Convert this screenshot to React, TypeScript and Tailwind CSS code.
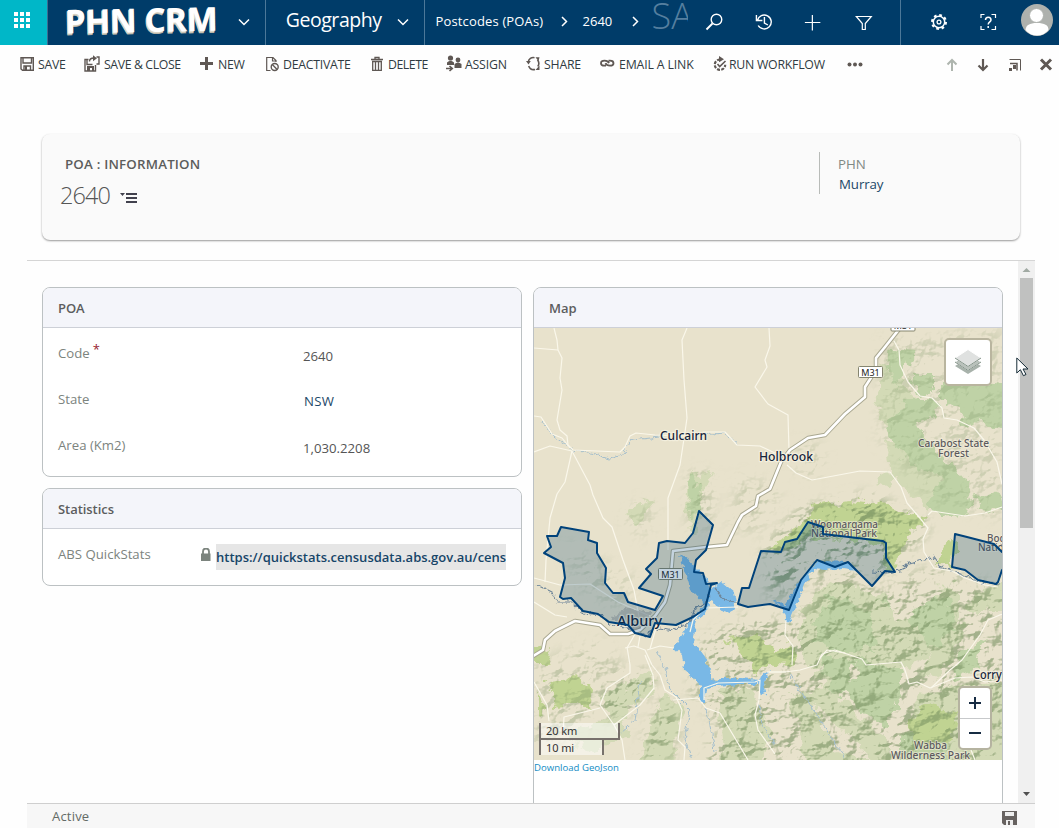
import React from "react";

const Chevron = ({ dir = "down" }: { dir?: "down" | "right" }) => (
  <svg className="shrink-0" width="12" height="12" viewBox="0 0 12 12" fill="none" stroke="#fff" strokeWidth="1.5">
    <path d={dir === "down" ? "M1 3.5l5 5 5-5" : "M4 2l4.5 4.5L4 11"} />
  </svg>
);

function TopBar() {
  return (
    <header className="flex h-[45px] bg-[#003c69] text-white">
      <div className="flex w-12 items-center border-r border-[#3d6c90] bg-[#00b7c8]">
        <div className="ml-3.5 -mt-[5px] grid grid-cols-3 gap-0.5">
          {Array.from({ length: 9 }, (_, i) => (
            <span key={i} className="h-1 w-1 bg-white" />
          ))}
        </div>
      </div>
      <div className="flex w-[218px] border-r border-[#4c7899]">
        <span className="ml-[17px] w-[172px] -rotate-1 whitespace-nowrap font-['Open_Sans',sans-serif] text-[33px] font-bold leading-[39px] tracking-[-0.4px] [text-shadow:-1px_1px_0_#d9d4c4,-1px_2px_0_#b9b5a9]">
          PHN CRM
        </span>
        <span className="mt-4 ml-px"><Chevron /></span>
      </div>
      <div className="flex w-[159px] border-r border-[#4c7899]">
        <span className="ml-[20px] w-[111px] whitespace-nowrap text-[19.5px] leading-[40px] tracking-[-0.45px]">Geography</span>
        <span className="mt-4"><Chevron /></span>
      </div>
      <nav className="flex w-[265px] text-[13px] leading-[42px]">
        <span className="ml-[11px] w-[122px] whitespace-nowrap tracking-[0.15px]">Postcodes (POAs)</span>
        <span className="mt-[15px]"><Chevron dir="right" /></span>
        <span className="ml-[13px] w-[46px]">2640</span>
        <span className="mt-[15px]"><Chevron dir="right" /></span>
        <span className="ml-[11px] mt-[-2px] h-8 w-[36px] overflow-hidden whitespace-nowrap font-['Open_Sans',sans-serif] text-[36px] font-light leading-[36px] text-[#557f9f]">SA</span>
      </nav>
      <svg width="211" height="45" viewBox="689 0 211 45" fill="none" stroke="#fff" strokeWidth="1.4">
        <circle cx="716.5" cy="19.5" r="5.3" /><path d="M712.5 23.5l-6 6" strokeWidth="1.8" />
        <path d="M757.5 20.5a7 7 0 1 1 .8 5M756.5 15v5.5h6M764.5 17v6l3.500 2" />
        <path d="M805 22.5h15.500M812.500 15v15.500" strokeWidth="1.2" />
        <path d="M856.500 16.500h15l-6 7v6h-3v-6z" strokeWidth="1.2" />
      </svg>
      <div className="flex flex-1 border-l border-[#4c7899]">
        <svg width="158" height="45" viewBox="901 0 158 45" fill="none" stroke="#fff">
          <circle cx="939" cy="22" r="5.700" strokeWidth="1.500" />
          <circle cx="939" cy="22" r="7" strokeWidth="2" strokeDasharray="2.750 2.750" />
          <circle cx="939" cy="22" r="1.900" strokeWidth="1.300" />
          <path d="M981 18v-3.500h3.500M991.500 14.500h4V18M995.500 26v3.500h-4M984.500 29.500H981V26" strokeWidth="1.200" />
          <path d="M985.500 20c0-3.800 5.500-3.800 5.500 0 0 1.800-2.800 2-2.800 4.500M988.200 26v1.900" strokeWidth="1.500" />
          <g stroke="none">
            <circle cx="1037" cy="20" r="16" fill="#aeb1ad" />
            <path d="M1025.500 30c.5-5 4-7 11.500-7s11.500 2 11.500 7q-4.500 5.500-11.500 5.500T1025.500 30z" fill="#fff" />
            <circle cx="1036.500" cy="15.500" r="7" fill="#fff" stroke="#aeb1ad" />
          </g>
        </svg>
      </div>
    </header>
  );
}

const icon = { height: 18, fill: "none", stroke: "#5f5854", strokeWidth: 1.4, className: "shrink-0 relative -top-px" };

const SaveIcon = () => (
  <svg {...icon} width="18" viewBox="0 0 18 18"><path d="M1 2.700h12.300v12.600H2.500L1 14zM3 3v5h8.500V3M4 15v-4h6.500v4" /><path d="M5 11h2v4H5z" fill="#5f5854" stroke="none" /></svg>
);
const SaveCloseIcon = () => (
  <svg {...icon} width="20" viewBox="0 0 20 18"><path d="M4.500 4.500H1v11.500h10.500V10M3 5v4.500h5.500M12.500 2H15v7h-2.500" /><path d="M5.500 6.500C5.500 3.500 7 3 10 3" /><path d="M9 .300l4 3-4 3z" fill="#5f5854" stroke="none" /><path d="M3 11h7v5H8v-3H6v3H3z" fill="#5f5854" stroke="none" /></svg>
);
const PlusIcon = () => (<svg {...icon} width="18" viewBox="0 0 18 18"><path d="M0 8.500h13M6.500 2v13" strokeWidth="3" /></svg>);
const DeactivateIcon = () => (
  <svg {...icon} width="17" viewBox="0 0 17 18"><path d="M4.500 15.500H.7V2.500H7L10 5.500V7M6.500 2.500V6H10" strokeWidth="1.200" /><circle cx="8.700" cy="12" r="3.500" /><path d="M6.300 9.600l4.800 4.800" /></svg>
);
const TrashIcon = () => (
  <svg {...icon} width="17" viewBox="0 0 17 18"><path d="M0 4.500h12M4 4V2.500h4V4M1.700 7v8.300h8.600V7M4.500 7v8M7.500 7v8M1 6.500h10" strokeWidth="1.300" /></svg>
);
const AssignIcon = () => (
  <svg {...icon} width="19" viewBox="0 0 19 18"><g fill="#5f5854" stroke="none"><circle cx="4.500" cy="3" r="2.600" /><path d="M1 10V7.500Q4.500 4 8 7.500V10z" /><circle cx="12" cy="5" r="2.400" /><path d="M8.500 13v-4q3.500-3 7 0v4z" /></g><path d="M0 13.500h6M3.500 11L6.300 13.500 3.500 16" strokeWidth="1.600" /></svg>
);
const ShareIcon = () => (
  <svg {...icon} width="18" viewBox="0 0 18 18"><path d="M2.300 7a5 5 0 0 1 6.200-4.300M11.500 5a5.500 5.500 0 0 1 .3 6.500M9 14.500a5.500 5.500 0 0 1-6.300-3.500" strokeWidth="1.600" /><g fill="#5f5854" stroke="none"><path d="M0 6h4.800L2.500 9.500zM9.500 2.300h4l-1 4zM13.500 10.500l-4 4.500h4z" /></g></svg>
);
const LinkIcon = () => (
  <svg {...icon} width="19" viewBox="0 0 19 18" strokeWidth="1.800"><path d="M9 8.200Q8 5.700 4.500 5.700 1 5.700 1 8.200T4.500 10.700H6M5.500 8.200Q6.500 10.700 10 10.700t3.500-2.500T10 5.700H8.500" /></svg>
);
const WorkflowIcon = () => (
  <svg {...icon} width="16" viewBox="0 0 16 18"><path d="M7 4.500a5.200 5.200 0 1 0 5.200 5.200" strokeWidth="2.200" strokeDasharray="3 1.300" /><path d="M4.500 9l2.200 2.500L12.500 6" strokeWidth="1.600" /><path d="M6 1l5 3.300-5 3z" fill="#5f5854" stroke="none" /></svg>
);

function Action({ children, label, box }: { children: React.ReactNode; label: string; box: string }) {
  return (
    <button className={`flex shrink-0 items-center whitespace-nowrap ${box}`}>
      {children}
      <span>{label}</span>
    </button>
  );
}

function CommandBar() {
  return (
    <div className="flex h-[39px] items-center pl-5 pt-px text-[12.3px] text-[#303b42]">
      <Action box="w-16 tracking-[-0.3px]" label="SAVE"><SaveIcon /></Action>
      <Action box="w-[116px] tracking-[-0.38px]" label="SAVE & CLOSE"><SaveCloseIcon /></Action>
      <Action box="w-[66px] tracking-[-0.3px]" label="NEW"><PlusIcon /></Action>
      <Action box="w-[105px] tracking-[-0.25px]" label="DEACTIVATE"><DeactivateIcon /></Action>
      <Action box="w-[75px] tracking-[-0.45px]" label="DELETE"><TrashIcon /></Action>
      <Action box="w-[80px] tracking-[-0.2px]" label="ASSIGN"><AssignIcon /></Action>
      <Action box="w-[74px] tracking-[-0.2px]" label="SHARE"><ShareIcon /></Action>
      <Action box="w-[113px] tracking-[-0.15px]" label="EMAIL A LINK"><LinkIcon /></Action>
      <Action box="w-[134px] tracking-[-0.25px]" label="RUN WORKFLOW"><WorkflowIcon /></Action>
      <svg className="-mt-px" width="212" height="39" viewBox="847 45 212 39" fill="none" stroke="#5f5854">
        <g fill="#5f5854" stroke="none"><circle cx="849.500" cy="64.500" r="2" /><circle cx="855" cy="64.500" r="2" /><circle cx="860.500" cy="64.500" r="2" /></g>
        <path d="M952 71V60M947.500 64.500l4.500-4.500 4.500 4.500" stroke="#aeb5ae" strokeWidth="2" />
        <path d="M983 59v11M978.500 65.500l4.500 4.500 4.500-4.500" strokeWidth="2.200" />
        <path d="M1009.500 59.500h11v11" /><path d="M1010 63.500h7v7" strokeWidth="1.500" /><path d="M1009 68h3v3h-3zM1013 65h3v4h-3z" fill="#5f5854" stroke="none" />
        <path d="M1041 59.500l10 10M1051 59.500l-10 10" strokeWidth="3" />
      </svg>
    </div>
  );
}

const COVERAGE = [
  "M544 553L551 547 547 536 557 536 561 527 589 532 588 540 597 543 597 553 606 568 605 583 613 593 624 593 628 602 655 610 663 596 639 588 651 574 646 569 657 558 659 543 667 541 685 543 693 533 699 511 713 525 706 550 696 560 694 572 703 573 706 584 717 583 711 585 705 609 693 617 676 625 655 623 650 637 635 633 628 625 609 622 598 614 583 611 571 598 563 599 560 597 565 578 563 563Z",
  "M738 604L742 588 749 588 761 551 781 552 785 542 797 539 808 522 823 527 823 534 883 541 886 543 886 558 895 572 885 571 872 586 848 562 835 567 817 560 801 580 789 610 770 604 748 607Z",
  "M955 534L967 537 994 544 1002 552 1010 556 1010 565 1002 570 998 582 996 584 978 580 965 570 952 567Z",
];

const ROADS = [
  "M554 328L557 340 558 350 562 358 560 378 562 390 557 420 560 430 567 436 568 445 573 450 620 452 625 447 630 436 636 433 655 435 683 436 704 432 725 432 737 445 760 446 775 453 787 457",
  "M534 348L558 350M687 328L682 340 684 380 687 418 685 432 680 465 668 498 668 550",
  "M769 328L770 346 765 360 767 367 755 387 768 404 788 415 789 450",
  "M534 416L541 417 552 434 562 438 570 448M534 452L550 446 572 451 565 482 557 494 550 518 546 560 545 582",
  "M572 451L590 485 593 495 603 518 612 527 623 560 634 590 640 622",
  "M894 341L899 350 900 365 908 382 920 396 932 398 942 408 944 418 957 420 974 428 984 440 997 462 1002 484",
  "M787 465L796 473 812 480 860 471 890 472 901 487 907 503 919 517 928 528 923 539 924 552 934 568 952 571 965 578 985 585 998 587",
  "M928 515L932 511 965 516 985 513 1002 507",
  "M534 578L560 585 590 584 618 602 650 616M534 602L555 615 567 617",
  "M625 648L634 646 645 650 652 665 660 675 665 690 676 697 682 710 678 740 685 747 684 760",
  "M627 647L630 665 630 673 607 688 600 705 614 725 622 740 625 760",
  "M534 682L547 705 549 721M563 735L564 717 600 708 M614 725L640 705 654 688 653 675 645 655",
  "M647 650L660 646 674 648M673 700L698 698 706 708 720 713 748 760",
  "M704 700V688L718 683 755 682 760 680 759 700 755 715 758 730 775 754",
  "M738 607L705 608 693 620 690 632M767 672L785 672 800 670 817 665 822 654 835 650 850 655 862 659 866 665 901 662 905 670 909 684 917 682 930 688 955 678 972 677 985 682 1002 680",
  "M931 688L950 670 962 660 980 635 988 620 1002 614",
  "M786 620L785 635 793 646 792 665M820 658L827 650 845 653M768 672L786 672",
  "M967 740L975 760M640 636L638 647M656 628L650 649M635 634L627 648",
];

const MOTORWAY = "M900 328L885 347 876 358 876 370 865 387 865 397 845 414 825 435 808 438 790 450 781 462 770 489 758 496 756 506 742 515 738 522 727 545 706 547 673 551 670 585 665 602 655 616 640 630 628 634 610 634 600 625 575 621 555 631 545 640 543 650 530 658";

function Label({ x, y, w, size = 12, children, muted }: { x: number; y: number; w: number; size?: number; children: string; muted?: boolean }) {
  return (
    <text x={x} y={y} textLength={w} lengthAdjust="spacingAndGlyphs" fontSize={size} fill={muted ? "#5c5a5e" : "#16243a"} stroke="#f4f0df" strokeWidth={muted ? 1.8 : 2.5} strokeOpacity={muted ? 0.65 : 0.9} strokeLinejoin="round" paintOrder="stroke" fontWeight={500} className="font-['Noto_Sans',sans-serif]">
      {children}
    </text>
  );
}

function Shield({ x, y, w = 24 }: { x: number; y: number; w?: number }) {
  return (
    <g>
      <rect x={x} y={y} width={w} height="11" rx="1" fill="#fff" stroke="#85856f" />
      <text x={x + w / 2} y={y + 9} fontSize="9" textAnchor="middle" fill="#222" className="font-['Noto_Sans',sans-serif]">M31</text>
    </g>
  );
}

function Terrain() {
  return (
    <svg className="block" width="468" height="432" viewBox="534 328 468 432">
      <defs>
        <filter id="rough" x="-10%" y="-10%" width="120%" height="120%">
          <feTurbulence type="fractalNoise" baseFrequency="0.07" numOctaves="4" seed="4" />
          <feDisplacementMap in="SourceGraphic" scale="20" xChannelSelector="R" yChannelSelector="G" />
          <feGaussianBlur stdDeviation="0.5" />
        </filter>
        <filter id="shore" x="-10%" y="-10%" width="120%" height="120%">
          <feTurbulence type="fractalNoise" baseFrequency="0.18" numOctaves="2" seed="9" />
          <feDisplacementMap in="SourceGraphic" scale="7" xChannelSelector="R" yChannelSelector="G" />
        </filter>
        <filter id="relief" x="0" y="0" width="100%" height="100%" colorInterpolationFilters="sRGB">
          <feTurbulence type="fractalNoise" baseFrequency="0.045 0.06" numOctaves="4" seed="12" />
          <feColorMatrix type="matrix" values="0 0 0 0 0  0 0 0 0 0  0 0 0 0 0  1 0 0 0 0" />
          <feDiffuseLighting surfaceScale="15" diffuseConstant="1.1" lightingColor="#fff">
            <feDistantLight azimuth="225" elevation="50" />
          </feDiffuseLighting>
          <feColorMatrix type="matrix" values="0 0 0 0 0.46  0 0 0 0 0.56  0 0 0 0 0.37  -1.25 0 0 0 0.78" />
        </filter>
        <filter id="soft"><feGaussianBlur stdDeviation="7" /></filter>
        <mask id="hills" maskUnits="userSpaceOnUse" x="534" y="328" width="468" height="432">
          <g filter="url(#soft)" fill="#fff">
            <path d="M700 640L750 615 800 620 830 570 885 590 925 570 1010 590V770H700L718 720 690 690z" fillOpacity="0.75" />
            <path d="M765 550L800 510 870 495 930 525 890 570 830 570 770 600z" fillOpacity="0.9" />
            <path d="M880 340L1002 330V520L930 500 880 440z" fillOpacity="0.3" />
            <path d="M534 665L600 640 625 670 650 670 650 690 625 710 534 750z" fillOpacity="0.4" />
            <path d="M665 695L680 720 670 760H638L650 725z" fillOpacity="0.8" />
            <path d="M600 700L645 670 655 680 620 720z" />
            <path d="M690 470L712 475 710 525 690 530z" fillOpacity="0.5" />
            <path d="M740 475L780 490 760 530 730 530zM800 440L825 450 815 480 795 470z" fillOpacity="0.35" />
            <path d="M640 500L660 510 645 540 620 520zM560 540L640 580 620 610 580 590z" fillOpacity="0.25" />
          </g>
        </mask>
      </defs>
      <rect x="534" y="328" width="468" height="432" fill="#e8e2cc" />
      <g filter="url(#rough)">
        <g fill="#d3dab6">
          <path d="M800 610L830 580 855 585 880 595 930 580 960 590 960 640 935 680 905 665 860 685 830 700 800 650z" />
          <path d="M790 690L830 690 860 720 890 740 890 770H810zM720 690L750 690 770 730 760 770H725zM600 700L650 672 655 682 618 725z" />
          <path d="M690 475L712 472 704 500 694 535 685 520zM640 500L655 503 637 525 625 515zM920 690L1010 680V770H900zM975 590L1010 580V610L970 610z" />
          <path d="M885 440L920 450 950 490 930 510 895 480 878 490 890 465zM560 735L620 715 630 735 590 750zM665 695L685 712 670 765H640L650 725zM880 360L920 400 905 440 875 410z" />
        </g>
        <g fill="#bfd2a6">
          <path d="M890 348L917 350 914 361 905 363 905 380 895 386 887 375zM912 375H934V388L923 394 915 388z" />
          <path d="M903 398L933 398 940 418 920 425 930 445 952 465 965 480 972 495 965 515 940 520 930 500 940 480 905 460 887 430z" />
          <path d="M942 378L1010 382V430L985 424 965 425 960 410 942 405zM975 490L1010 498V512L980 510z" />
          <path d="M825 655L860 662 900 665 908 680 900 700 885 730 840 695 820 675zM880 600L910 590 950 600 955 630 930 650 905 615zM690 475L700 480 702 510 690 520zM830 595L870 610 875 650 840 650 810 640zM900 735L950 740 945 765H900zM960 655L985 640 975 670 950 680z" />
        </g>
        <g fill="#c0d392">
          <path d="M765 551L798 525 815 504 850 500 887 505 925 518 900 545 898 565 885 572 880 545 822 537 785 548z" />
          <path d="M725 640L758 632 770 650 793 640 795 665 775 662 755 675 740 655zM548 680L570 677 590 688 595 710 575 705 555 708z" />
          <path d="M534 650L556 645 550 665 534 665zM534 690L545 712 534 716zM907 720L930 705 958 712 955 738 925 748 910 745z" />
          <path d="M950 538L958 540 952 570 936 560z" />
        </g>
        <g fill="#e8e2cc">
          <path d="M905 668L930 658 920 683 912 700 895 720 900 690zM855 665L862 672 848 682zM885 592L950 575 930 600 900 625zM790 670L825 665 805 685zM810 700L860 745 870 765 835 750z" />
        </g>
      </g>
      <g mask="url(#hills)"><rect x="534" y="328" width="468" height="432" filter="url(#relief)" /></g>
      <g fill="none" stroke="#a5bfcc" strokeWidth="1" filter="url(#shore)">
        <path d="M541 421L555 438 572 450 595 454 610 459 622 455 632 440 660 437M700 435L725 433 738 444" />
        <path d="M656 650L666 670 670 690 690 710 685 740 692 760M640 680L635 720 620 733M706 708L712 735 715 750M759 705L762 725 775 745M790 675L810 705 845 758" />
      </g>
      <g fill="#79b8e6" filter="url(#shore)">
        <path d="M679 554L688 559 695 567 706 578 710 590 722 582 734 592 736 603 731 614 719 610 712 600 706 612 697 619 693 643 703 655 710 668 712 681 725 678 742 678 757 680 770 671 764 682 766 694 761 696 758 684 744 684 716 686 706 688 704 703 700 703V686L692 677 684 670 682 655 674 648 682 635 691 620 705 605 691 590 685 570z" />
        <path d="M770 600L785 605 800 582 812 565 826 561 848 562 858 570 842 568 826 570 814 569 804 584 797 604 788 624 782 608z" />
      </g>
      <g fill="none" strokeLinejoin="round" filter="url(#shore)" stroke="#6f8699" strokeWidth="1.200">
        <path d="M536 584L552 592 558 602 572 602 584 613 600 615 610 624 630 628 646 635 660 628 673 631 690 622 694 610 706 603 709 594M715 588L725 600 740 604M872 572L887 573 900 571 908 563 925 560 932 556 939 566 958 573 979 582 1000 584" />
      </g>
      <g fill="none" stroke="#faf7ea" strokeWidth="1.200" strokeLinejoin="round">{ROADS.map((d) => <path key={d} d={d} />)}</g>
      <path d={MOTORWAY} fill="none" stroke="#aaa891" strokeWidth="4.500" strokeLinejoin="round" />
      <path d={MOTORWAY} fill="none" stroke="#fff" strokeWidth="2.600" strokeLinejoin="round" />
      <path d="M624 604L638 607 655 612 642 626 630 625 614 617z" fill="#8b8989" opacity="0.4" filter="url(#rough)" />
      <Shield x={891} y={320} />
      <Shield x={858.5} y={366.5} />
      <Shield x={658.5} y={568.5} />
      <Label x={660} y={440} w={47}>Culcairn</Label>
      <Label x={759} y={461} w={54}>Holbrook</Label>
      <Label x={918} y={447} w={71} size={10} muted>Carabost State</Label>
      <Label x={938} y={457} w={31} size={10} muted>Forest</Label>
      <Label x={811} y={528} w={67} size={10} muted>Woomargama</Label>
      <Label x={811} y={537} w={66} size={10} muted>National Park</Label>
      <Label x={987} y={542} w={37} size={10} muted>Bogong</Label>
      <Label x={978} y={551} w={40} size={10} muted>National</Label>
      <Label x={617} y={626} w={45} size={14}>Albury</Label>
      <Label x={973} y={679} w={49}>Corryong</Label>
      <Label x={914} y={749} w={33} size={10} muted>Wabba</Label>
      <Label x={891} y={759} w={79} size={10} muted>Wilderness Park</Label>
      <g fill="#003f70" fillOpacity="0.23" stroke="#00427a" strokeWidth="2" strokeLinejoin="round">{COVERAGE.map((d) => <path key={d} d={d} />)}</g>
    </svg>
  );
}

function MapView() {
  return (
    <div className="relative h-[432px] w-[468px] overflow-hidden font-['Noto_Sans',sans-serif]">
      <Terrain />
      <button className="absolute left-[410px] top-[10px] flex h-[48px] w-[48px] items-center justify-center rounded-[5px] border-2 border-[#b9b59f] bg-white">
        <svg width="28" height="28" viewBox="0 0 28 28">
          <path d="M1 18l13-8 13 8-13 8z" fill="#a8b2ab" /><path d="M1 14l13-8 13 8-13 8.500z" fill="#b9c1bb" stroke="#fff" /><path d="M1 10l13-8.500L27 10l-13 8.500z" fill="#dfe1e0" stroke="#fff" />
          <path d="M1 10l13 8.500L27 10M1 14l13 8.500L27 14" fill="none" stroke="#849389" strokeWidth="1" />
        </svg>
      </button>
      <div className="absolute left-[424px] top-[358px] flex h-[64px] w-[34px] flex-col overflow-hidden rounded-[5px] border-2 border-[#b5b3a0] bg-white">
        <button className="flex flex-1 items-center justify-center border-b border-[#c7c9cb]"><svg width="14" height="14" viewBox="0 0 14 14" stroke="#172c43" strokeWidth="2"><path d="M1 7h12M7 1v12" /></svg></button>
        <button className="flex flex-1 items-center justify-center"><svg width="14" height="14" viewBox="0 0 14 14" stroke="#172c43" strokeWidth="2"><path d="M1 7h12" /></svg></button>
      </div>
      <div className="absolute left-[5px] top-[395px] text-[11px] leading-[15px] tracking-[-0.1px] text-[#333]">
        <div className="h-[17px] w-[81px] border-2 border-t-0 border-[#77716c] bg-white/50 pl-[5px]">20 km</div>
        <div className="h-[15px] w-[65px] border-x-2 border-[#77716c] bg-white/50 pl-[5px]">10 mi</div>
      </div>
    </div>
  );
}

function Panel({ title, box, children }: { title: string; box: string; children: React.ReactNode }) {
  return (
    <section className={`overflow-hidden rounded-lg border border-[#bcc1c3] bg-white ${box}`}>
      <h2 className="h-10 border-b border-[#cdd0d7] bg-[#f4f5fa] pl-[15px] text-[13px] font-semibold leading-[41px] tracking-[-0.05px] text-[#5c5d5e]">{title}</h2>
      {children}
    </section>
  );
}

export default function App() {
  return (
    <div className="relative flex h-[828px] w-[1059px] flex-col overflow-hidden bg-[#fefefe] font-['Open_Sans','Noto_Sans',sans-serif]">
      <TopBar />
      <CommandBar />
      <section className="ml-[42px] mt-[50px] flex h-[106px] w-[978px] shrink-0 rounded-lg bg-[#fafafa] shadow-[0_1px_2px_#999]">
        <div className="w-[777px] pl-[18px] pt-[20px]">
          <h1 className="pl-[5px] text-[13.3px] font-semibold leading-[20px] tracking-[0.2px] text-[#5c5d5c]">POA : INFORMATION</h1>
          <div className="mt-[3px] flex items-center text-[23.5px] font-light leading-[36px] tracking-[-0.9px] text-[#555]">
            <span className="w-[60px]">2640</span>
            <svg className="mt-[5px]" width="18" height="12" viewBox="0 0 18 12"><path d="M0 1h5L2.500 4zM6 1h11v2H6zM6 5h11v2H6zM6 9h11v2H6z" fill="#41414d" /></svg>
          </div>
        </div>
        <div className="mt-[18px] h-[42px] border-l border-[#b8bbb8] pl-[18px] pt-[2px] text-[13.3px] leading-[20px]">
          <div className="text-[#818984]">PHN</div>
          <div className="pl-px tracking-[-0.1px] text-[#1c4868]">Murray</div>
        </div>
      </section>
      <main className="ml-[27px] mt-[20px] flex h-[543px] w-[1008px] overflow-hidden border-t border-[#d5d5d5]">
        <div className="ml-[15px] mt-[26px] flex w-[480px] flex-col gap-[11px] text-[13.2px]">
          <Panel title="POA" box="h-[190px]">
            <dl className="flex flex-col pl-[15px] leading-[20px] text-[#7c847e]">
              <div className="flex h-[46px] pt-[15px]"><dt className="flex w-[245px]">Code<span className="-mt-[4px] ml-[3px] text-[13px] text-[#981b30]">*</span></dt><dd className="mt-[3px] text-[#555]">2640</dd></div>
              <div className="flex h-[46px] pt-[15px]"><dt className="w-[246px]">State</dt><dd className="mt-[2px] tracking-[0.3px] text-[#1c4868]">NSW</dd></div>
              <div className="flex h-[46px] pt-[15px]"><dt className="w-[245px]">Area (Km2)</dt><dd className="mt-[3px] text-[#555]">1,030.2208</dd></div>
            </dl>
          </Panel>
          <Panel title="Statistics" box="h-[98px]">
            <div className="flex h-14 pl-[15px] leading-[20px]">
              <span className="w-[143px] pt-[15px] text-[#7c847e]">ABS QuickStats</span>
              <svg className="mt-[19px]" width="10" height="13" viewBox="0 0 10 13"><path d="M2 6V3.500a3 3 0 0 1 6 0V6" fill="none" stroke="#7c847e" strokeWidth="1.800" /><path d="M0 5.500h9.500V13H0z" fill="#7c847e" /></svg>
              <a className="ml-[5px] mt-[15px] h-[26px] w-[290px] overflow-hidden whitespace-nowrap bg-[#e6e6e6] text-[13px] font-semibold leading-[26px] text-[#164568]">https://quickstats.censusdata.abs.gov.au/cens</a>
            </div>
          </Panel>
        </div>
        <Panel title="Map" box="ml-[11px] mt-[26px] h-[530px] w-[470px] shrink-0">
          <MapView />
          <a className="block text-[9.6px] leading-[15px] text-[#168dc4]">Download GeoJson</a>
        </Panel>
        <div className="ml-[15px] flex w-[17px] flex-col items-center bg-[#f0f0f0]">
          <svg width="17" height="17" viewBox="0 0 17 17"><path d="M4.500 11l4-4 4 4z" fill="#a1aaa3" /></svg>
          <div className="h-[250px] w-[13px] bg-[#c0c1c0]" />
          <svg className="mt-auto" width="17" height="17" viewBox="0 0 17 17"><path d="M5 6h7l-3.500 4z" fill="#505050" /></svg>
        </div>
      </main>
      <footer className="ml-[27px] flex h-[25px] w-[1008px] justify-between border-t border-[#cfcfcf] bg-[#f7f7f7] pl-[25px] pr-[18px] text-[13px] leading-[25px] tracking-[0.2px] text-[#636b66]">
        <span>Active</span>
        <svg className="mt-[7px]" width="15" height="14" viewBox="0 0 15 14"><path d="M0 0h15v14H2l-2-2z" fill="#676260" /><path d="M3 1h9v4H3zM4 9h7v5H4z" fill="#eee" /><path d="M6 10h2v4H6z" fill="#676260" /></svg>
      </footer>
      <svg className="absolute left-[1016px] top-[357px]" width="13" height="20" viewBox="0 0 13 20"><path d="M.8 1v15l3.600-3.300 3 6 2.600-1.200-3-5.500H12z" fill="#fff" stroke="#152b36" /></svg>
    </div>
  );
}
